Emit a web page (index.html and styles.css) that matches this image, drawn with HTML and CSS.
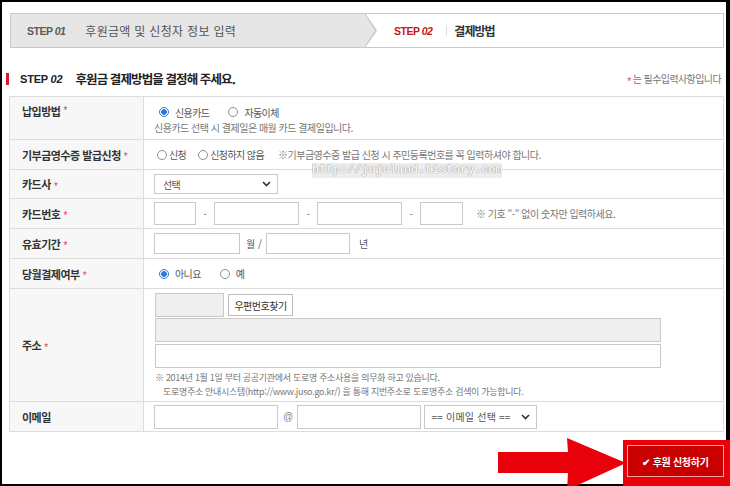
FILE: index.html
```html
<!DOCTYPE html>
<html lang="ko">
<head>
<meta charset="utf-8">
<title>결제방법</title>
<link rel="stylesheet" href="styles.css">
</head>
<body>
<div class="frame">
  <div class="steps">
    <div class="step step-done"><span class="step-no">STEP <i>01</i></span><span class="step-name">후원금액 및 신청자 정보 입력</span></div>
    <div class="step step-now"><span class="step-no">STEP <i>02</i></span><span class="step-sep"></span><span class="step-name">결제방법</span></div>
  </div>

  <div class="heading">
    <h2 class="title"><span class="title-step">STEP <i>02</i></span>후원금 결제방법을 결정해 주세요.</h2>
    <p class="req-note"><span class="req">*</span> 는 필수입력사항입니다</p>
  </div>

  <div class="form">
    <div class="label label-top">납입방법 <span class="req">*</span></div>
    <div class="field field-stack">
      <div class="choices">
        <span class="choice"><span class="radio on"></span>신용카드</span>
        <span class="choice"><span class="radio"></span>자동이체</span>
      </div>
      <p class="hint">신용카드 선택 시 결제일은 매월 카드 결제일입니다.</p>
    </div>

    <div class="label">기부금영수증 발급신청 <span class="req">*</span></div>
    <div class="field">
      <div class="choices choices-tight">
        <span class="choice"><span class="radio"></span>신청</span>
        <span class="choice"><span class="radio"></span>신청하지 않음</span>
      </div>
      <p class="hint">※기부금영수증 발급 신청 시 주민등록번호를 꼭 입력하셔야 합니다.</p>
    </div>

    <div class="label">카드사 <span class="req">*</span></div>
    <div class="field">
      <div class="select select-card"><span>선택</span><svg class="chev" width="9" height="6" viewBox="0 0 9 6"><path d="M1 1l3.5 3.5L8 1" fill="none" stroke="#333" stroke-width="1.6"/></svg></div>
    </div>

    <div class="label">카드번호 <span class="req">*</span></div>
    <div class="field">
      <input class="input in-card-s" type="text">
      <span class="dash">-</span>
      <input class="input in-card" type="text">
      <span class="dash">-</span>
      <input class="input in-card" type="text">
      <span class="dash">-</span>
      <input class="input in-card-s2" type="text">
      <p class="hint hint-card">※ 기호 "-" 없이 숫자만 입력하세요.</p>
    </div>

    <div class="label">유효기간 <span class="req">*</span></div>
    <div class="field">
      <input class="input in-exp" type="text">
      <span class="unit">월 /</span>
      <input class="input in-exp2" type="text">
      <span class="unit unit-year">년</span>
    </div>

    <div class="label">당월결제여부 <span class="req">*</span></div>
    <div class="field">
      <div class="choices">
        <span class="choice"><span class="radio on"></span>아니요</span>
        <span class="choice"><span class="radio"></span>예</span>
      </div>
    </div>

    <div class="label">주소 <span class="req">*</span></div>
    <div class="field field-addr">
      <div class="zip-row">
        <input class="input in-zip" type="text" readonly>
        <button class="zip-btn" type="button">우편번호찾기</button>
      </div>
      <input class="input in-addr in-addr-ro" type="text" readonly>
      <input class="input in-addr in-addr2" type="text">
      <div class="addr-notes">
        <p class="addr-note">※ 2014년 1월 1일 부터 공공기관에서 도로명 주소사용을 의무화 하고 있습니다.</p>
        <p class="addr-note addr-note2">도로명주소 안내시스템(http://www.juso.go.kr/) 을 통해 지번주소로 도로명주소 검색이 가능합니다.</p>
      </div>
    </div>

    <div class="label">이메일</div>
    <div class="field">
      <input class="input in-mail" type="text">
      <span class="at">@</span>
      <input class="input in-mail" type="text">
      <div class="select select-mail"><span>== 이메일 선택 ==</span><svg class="chev" width="9" height="6" viewBox="0 0 9 6"><path d="M1 1l3.5 3.5L8 1" fill="none" stroke="#333" stroke-width="1.6"/></svg></div>
    </div>
  </div>

  <div class="actions">
    <button class="submit" type="button">✔ 후원 신청하기</button>
  </div>

  <div class="watermark">http://jujuland.tistory.com</div>
</div>

<div class="highlight"></div>
<svg class="arrow" width="135" height="52" viewBox="495 434 135 52">
  <polygon points="498,452 568,452 567,438 626,463 567,490 568,473 498,473" fill="#e8000b"/>
</svg>
</body>
</html>
```

FILE: styles.css
```css
html, body {
  margin: 0;
  padding: 0;
}

body {
  width: 730px;
  height: 486px;
  position: relative;
  overflow: hidden;
  background: #fff;
  font-family: "Noto Sans CJK KR", "Noto Sans", sans-serif;
  color: #333;
}

.frame {
  box-sizing: border-box;
  width: 730px;
  height: 486px;
  border: 2px solid #000;
  border-right-width: 4px;
  padding: 11px 2px 0 7px;
  position: relative;
  overflow: hidden;
}

/* ---------- steps ---------- */
.steps {
  display: flex;
  box-sizing: border-box;
  height: 35px;
  margin-left: 1px;
  border: 1px solid #c9c9c9;
}

.step {
  display: flex;
  align-items: center;
  box-sizing: border-box;
}

.step-done {
  width: 354px;
  padding-left: 16px;
  background: #e6e6e6;
  position: relative;
}

.step-done::before,
.step-done::after {
  content: "";
  position: absolute;
  left: 100%;
  clip-path: polygon(0 0, 100% 50%, 0 100%);
}

.step-done::before {
  top: -1px;
  bottom: -1px;
  width: 12px;
  background: #c9c9c9;
  z-index: 1;
}

.step-done::after {
  top: 1px;
  bottom: 1px;
  width: 10px;
  background: #e6e6e6;
  z-index: 2;
}

.step-no {
  font-family: "Liberation Sans", Arial, sans-serif;
  font-weight: bold;
  font-size: 10.5px;
  letter-spacing: -0.5px;
  color: #5a5a5a;
}

.step-no i {
  font-style: italic;
}

.step-name {
  margin-left: 20px;
  font-size: 12px;
  letter-spacing: 0.3px;
  color: #555;
}

.step-now {
  flex: 1;
  padding-left: 29px;
  background: #fff;
}

.step-now .step-no {
  color: #c8161d;
}

.step-sep {
  width: 1px;
  height: 11px;
  background: #dcdcdc;
  margin: 0 7px 0 14px;
}

.step-now .step-name {
  margin-left: 0;
  font-weight: bold;
  letter-spacing: -1px;
  color: #333;
}

/* ---------- heading ---------- */
.heading {
  display: flex;
  justify-content: space-between;
  align-items: flex-end;
  margin: 24px 3px 10px -3px;
  height: 14px;
}

.title {
  margin: 0;
  display: flex;
  align-items: center;
  font-size: 12.5px;
  line-height: 14px;
  font-weight: bold;
  letter-spacing: -0.9px;
  color: #222;
}

.title::before {
  content: "";
  width: 3px;
  height: 12px;
  background: #d71920;
  margin-right: 11px;
}

.title-step {
  font-family: "Liberation Sans", Arial, sans-serif;
  font-size: 11px;
  letter-spacing: -0.2px;
  margin-right: 13px;
}

.title-step i {
  font-style: italic;
}

.req-note {
  margin: 0;
  font-size: 10px;
  line-height: 12px;
  letter-spacing: -0.6px;
  color: #777;
}

.req {
  color: #e0454a;
  font-family: "Liberation Sans", Arial, sans-serif;
  font-weight: normal;
  font-size: 10px;
  position: relative;
  top: 2px;
}

/* ---------- form grid ---------- */
.form {
  display: grid;
  grid-template-columns: 134px 1fr;
  grid-template-rows: 43px 30px 29px 30px 30px 30px 113px 30px;
  border: 1px solid #dcdcdc;
  border-bottom: 0;
}

.label,
.field {
  box-sizing: border-box;
  border-bottom: 1px solid #dcdcdc;
  display: flex;
  align-items: center;
}

.label {
  background: #f7f7f7;
  border-right: 1px solid #dcdcdc;
  padding-left: 12px;
  font-size: 11px;
  font-weight: bold;
  letter-spacing: -0.5px;
  color: #333;
}

.label .req {
  margin-left: 3px;
}

.label-top {
  align-items: flex-start;
  padding-top: 6px;
}

.field {
  padding-left: 10px;
  font-size: 10px;
  letter-spacing: -0.6px;
  color: #555;
}

.field-stack {
  flex-direction: column;
  align-items: flex-start;
  justify-content: center;
  padding-top: 3px;
}

.choices {
  display: flex;
  align-items: center;
  line-height: 15px;
}

.choice {
  display: flex;
  align-items: center;
  margin-right: 14px;
}

.radio {
  box-sizing: border-box;
  width: 10px;
  height: 10px;
  border-radius: 50%;
  border: 1px solid #8f8f8f;
  background: #fff;
  margin: 0 6px 0 5px;
}

.radio.on {
  border-color: #2f7ad6;
  background: radial-gradient(circle, #2f7ad6 0 2.6px, #fff 3.1px);
}

.choices-tight .choice {
  margin-right: 9px;
}

.choices-tight .radio {
  margin: 0 2px 0 3px;
}

.hint {
  margin: 0;
  font-size: 10px;
  line-height: 15px;
  letter-spacing: -0.5px;
  color: #777;
}

.choices-tight + .hint {
  margin-left: 5px;
}

/* selects */
.select {
  box-sizing: border-box;
  height: 20px;
  border: 1px solid #c9c9c9;
  background: #fff;
  display: flex;
  align-items: center;
  justify-content: space-between;
  padding: 0 6px 0 8px;
  font-size: 10px;
  color: #555;
}

.select-card {
  width: 124px;
}

.select-mail {
  width: 113px;
  height: 24px;
  margin-left: 3px;
  padding-left: 7px;
  letter-spacing: 0.2px;
}

/* inputs */
.input {
  box-sizing: border-box;
  margin: 0;
  padding: 0;
  border: 1px solid #c9c9c9;
  background: #fff;
  height: 23px;
  font: inherit;
}

.in-card-s { width: 42px; }
.in-card { width: 85px; }
.in-card-s2 { width: 43px; }

.dash {
  width: 18px;
  text-align: center;
  color: #777;
}

.hint-card {
  margin-left: 13px;
}

.in-exp {
  width: 86px;
  height: 21px;
}

.in-exp2 {
  width: 84px;
  height: 21px;
}

.unit {
  margin: 0 4px 0 6px;
  letter-spacing: 0;
  color: #555;
}

.unit-year {
  margin-left: 9px;
}

/* address */
.field-addr {
  flex-direction: column;
  align-items: flex-start;
  justify-content: flex-start;
  padding-top: 4px;
  padding-left: 11px;
}

.zip-row {
  display: flex;
  align-items: center;
}

.in-zip {
  width: 69px;
  height: 24px;
  background: #efefef;
}

.zip-btn {
  box-sizing: border-box;
  width: 65px;
  height: 22px;
  margin: 0 0 0 4px;
  padding: 0;
  border: 1px solid #bdbdbd;
  background: #fff;
  font-family: inherit;
  font-size: 10px;
  letter-spacing: -0.5px;
  color: #333;
}

.in-addr {
  width: 506px;
  height: 24px;
}

.in-addr-ro {
  margin-top: 1px;
  background: #efefef;
}

.in-addr2 {
  margin-top: 2px;
}

.addr-notes {
  margin-top: 3px;
  display: flex;
  flex-direction: column;
}

.addr-note {
  margin: 0;
  font-size: 9px;
  line-height: 13.5px;
  letter-spacing: -0.3px;
  color: #777;
}

.addr-note2 {
  padding-left: 8px;
}

/* email */
.in-mail {
  width: 124px;
  height: 24px;
}

.at {
  margin: 0 4px 0 5px;
  color: #888;
  font-family: "Liberation Sans", Arial, sans-serif;
}

/* actions */
.actions {
  display: flex;
  justify-content: flex-end;
  margin-top: 13px;
}

.submit {
  position: relative;
  z-index: 2;
  box-sizing: border-box;
  width: 97px;
  height: 32px;
  margin: 0;
  padding: 0;
  border: 1px solid #f3a3a3;
  background: #c90000;
  color: #fff;
  font-family: "Noto Sans CJK KR", sans-serif;
  font-size: 10px;
  font-weight: bold;
  letter-spacing: -0.3px;
}

/* watermark over the table */
.watermark {
  position: absolute;
  left: 310px;
  top: 161px;
  width: 190px;
  height: 15px;
  background: rgba(222, 222, 222, 0.55);
  font-family: "Liberation Mono", monospace;
  font-weight: bold;
  font-size: 12px;
  line-height: 15px;
  letter-spacing: -0.15px;
  color: #f5f5f5;
  text-shadow: 0 0 1px #9a9a9a, 0 0 1px #9a9a9a;
  white-space: nowrap;
  overflow: hidden;
}

/* annotation overlay */
.highlight {
  position: absolute;
  left: 623px;
  top: 440px;
  width: 107px;
  height: 46px;
  background: #e8000b;
  z-index: 1;
}

.arrow {
  position: absolute;
  left: 495px;
  top: 434px;
  z-index: 1;
}
```
